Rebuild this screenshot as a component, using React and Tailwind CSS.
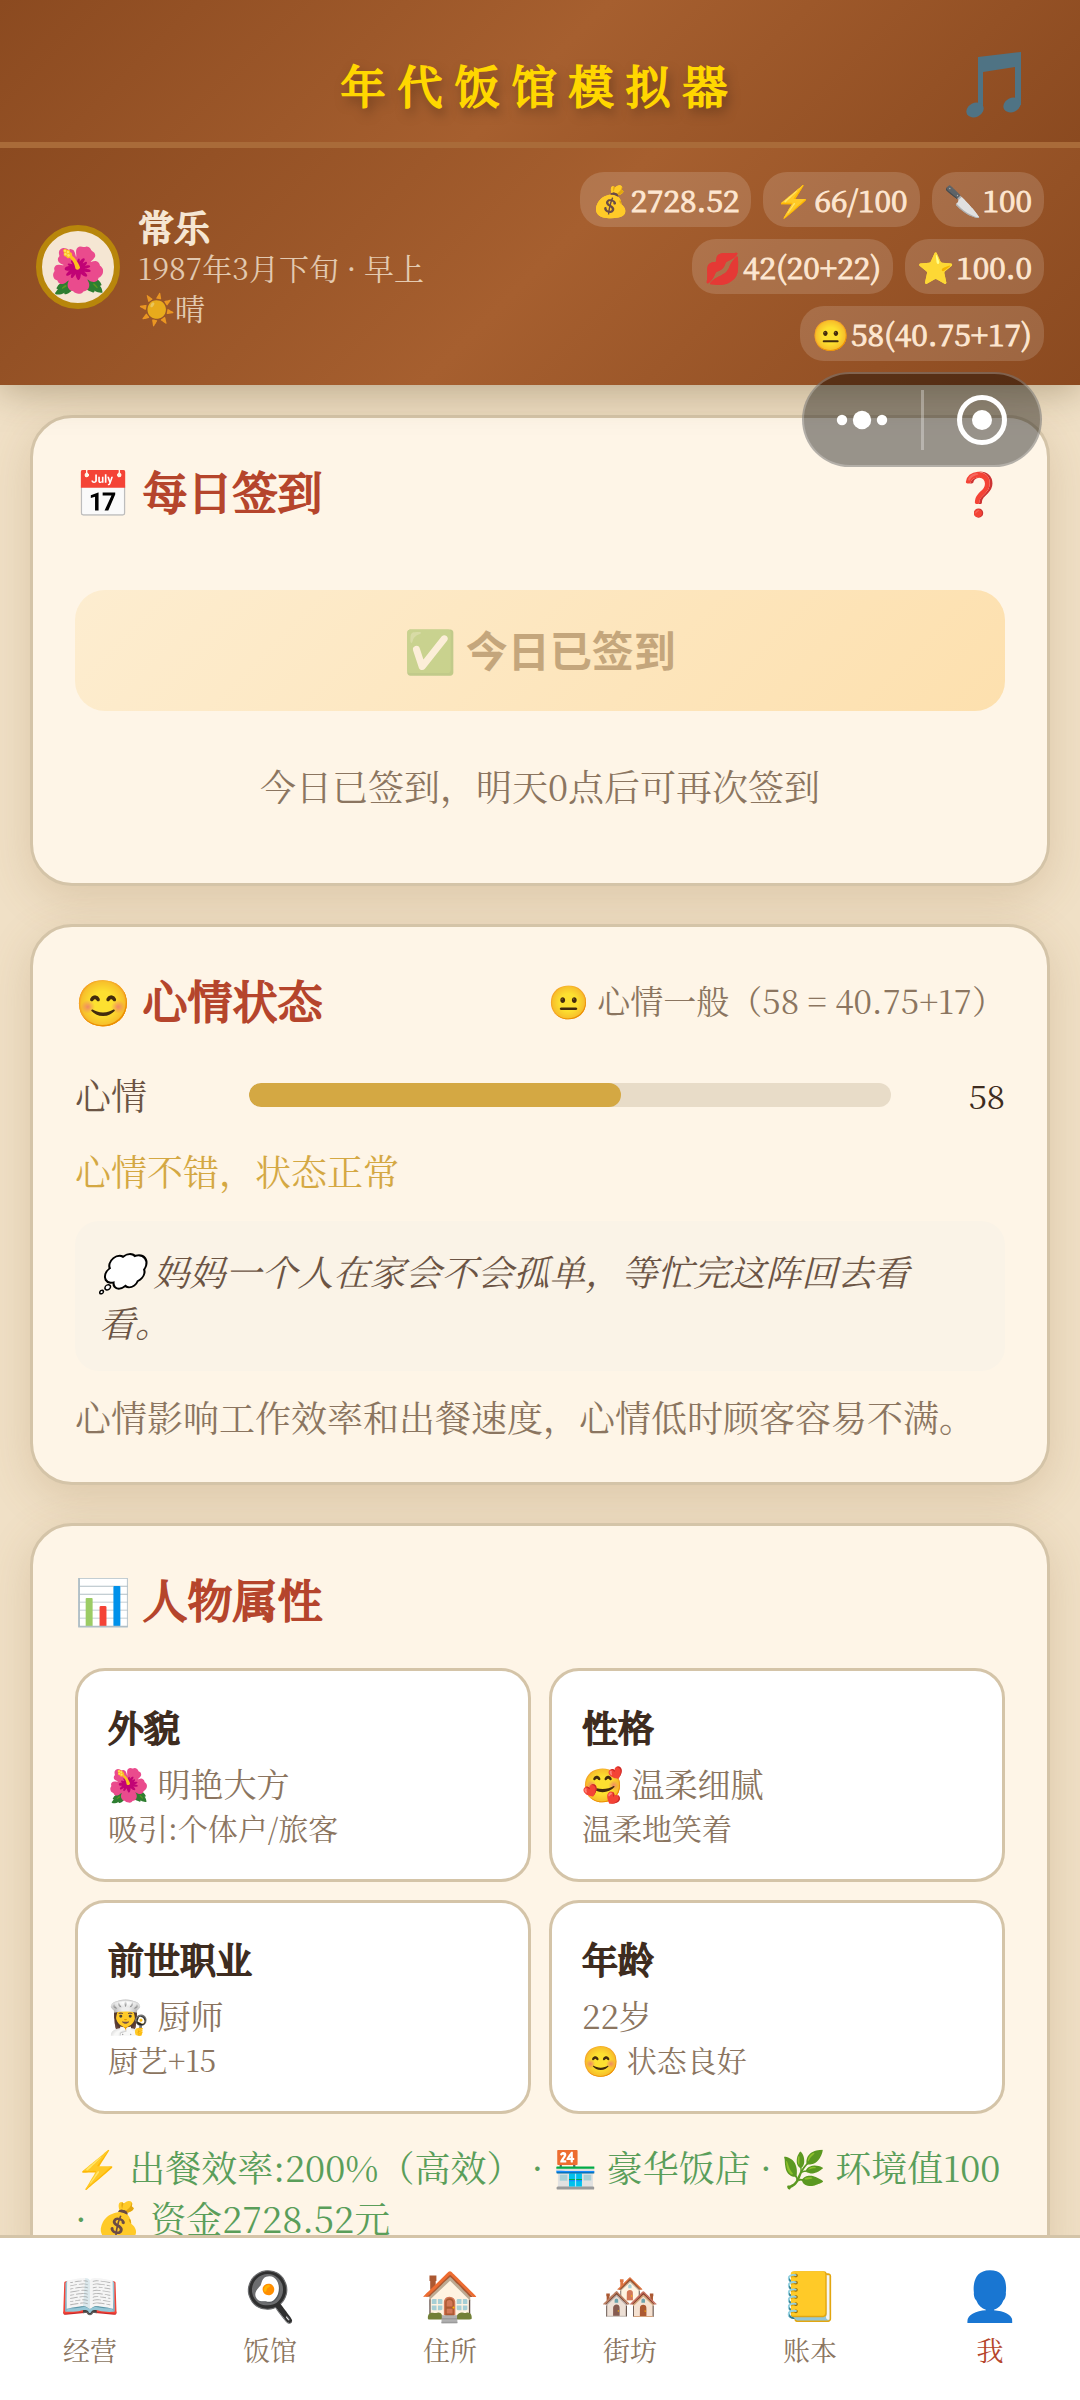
import { useState } from "react";

const STATS = [
    { icon: "💰", label: "资金", value: "2728.52" },
    { icon: "⚡", label: "体力", value: "66/100" },
    { icon: "🔪", label: "厨艺", value: "100" },
    { icon: "💋", label: "魅力", value: "42(20+22)" },
    { icon: "⭐", label: "口碑", value: "100.0" },
    { icon: "😐", label: "心情", value: "58(40.75+17)" },
];

const ATTRIBUTES = [
    { title: "外貌", main: "🌺 明艳大方", sub: "吸引:个体户/旅客" },
    { title: "性格", main: "🥰 温柔细腻", sub: "温柔地笑着" },
    { title: "前世职业", main: "👩‍🍳 厨师", sub: "厨艺+15" },
    { title: "年龄", main: "22岁", sub: "😊 状态良好" },
];

const TABS = [
    { id: "business", icon: "📖", label: "经营" },
    { id: "restaurant", icon: "🍳", label: "饭馆" },
    { id: "home", icon: "🏠", label: "住所" },
    { id: "street", icon: "🏘️", label: "街坊" },
    { id: "ledger", icon: "📒", label: "账本" },
    { id: "me", icon: "👤", label: "我" },
];

function Card({ icon, title, extra, children }) {
    return (
        <section className="rounded-[42px] border-3 border-[#d4c4a8] bg-[#fef5e7] px-[42px] pt-[37px] pb-[39px] shadow-[0_12px_45px_rgba(139,100,50,0.2)]">
            <div className="flex items-center justify-between">
                <h2 className="text-[45px] leading-[72px] text-[#b5452c] [-webkit-text-stroke:2px]">
                    {icon} {title}
                </h2>
                {extra}
            </div>
            {children}
        </section>
    );
}

function MusicNote() {
    return (
        <svg width="56" height="66" viewBox="0 0 56 66" fill="#4f7384">
            <path d="M12 5 L55 0 V53 H49 V15 L17 20 V57 H12 Z" />
            <ellipse cx="9" cy="58" rx="9" ry="7" transform="rotate(-28 9 58)" />
            <ellipse cx="46" cy="53" rx="9" ry="7" transform="rotate(-28 46 53)" />
        </svg>
    );
}

// Floating mini program capsule
function Capsule() {
    return (
        <div className="fixed top-[372px] right-[38px] z-20 flex h-[95px] w-[240px] items-center rounded-full border-2 border-white/25 bg-black/40">
            <button type="button" aria-label="更多" className="flex h-full flex-1 items-center justify-center">
                <svg width="52" height="20" viewBox="0 0 52 20" fill="#fff">
                    <circle cx="6" cy="10" r="5.2" />
                    <circle cx="26" cy="10" r="9.2" />
                    <circle cx="46" cy="10" r="5.2" />
                </svg>
            </button>
            <span className="h-[60px] w-[3px] bg-white/30"></span>
            <button type="button" aria-label="关闭" className="flex h-full flex-1 items-center justify-center">
                <svg width="52" height="52" viewBox="0 0 52 52">
                    <circle cx="26" cy="26" r="22.5" fill="none" stroke="#fff" strokeWidth="5" />
                    <circle cx="26" cy="26" r="10" fill="#fff" />
                </svg>
            </button>
        </div>
    );
}

export default function App() {
    const [tab, setTab] = useState("me");
    const mood = 58;

    return (
        <div className="min-h-screen bg-[#f0e0c6] font-['Noto_Serif_CJK_SC','Noto_Serif_SC','Liberation_Serif','Noto_Sans_CJK_SC',serif] text-[#3e2c20]">
            <div className="relative z-10 shadow-[0_6px_36px_rgba(80,60,20,0.35)]">
                <header className="relative flex h-[148px] items-center justify-center border-b-6 border-[#a96b39] bg-[linear-gradient(135deg,#8b4a20_0%,#a65f2f_50%,#8b4a20_100%)] pt-7">
                    <h1 className="text-[45px] leading-[60px] tracking-[12px] text-[#ffd700] [-webkit-text-stroke:2px] [text-shadow:3px_6px_12px_rgba(0,0,0,0.5)]">
                        年代饭馆模拟器
                    </h1>
                    <button type="button" aria-label="音乐" className="absolute right-[58px]">
                        <MusicNote />
                    </button>
                </header>

                <div className="flex items-center justify-between bg-[linear-gradient(135deg,#8b4a20_0%,#a65f2f_50%,#8b4a20_100%)] px-9 py-6">
                    <div className="flex items-center gap-[18px] text-[#f5e6d3]">
                        <div className="flex size-[84px] shrink-0 items-center justify-center rounded-full border-6 border-[#b8860b] bg-[#f5e6d3] text-[45px] leading-none">
                            🌺
                        </div>
                        <div>
                            <p className="text-[36px] leading-[40px] [-webkit-text-stroke:2px]">常乐</p>
                            <p className="text-[30px] leading-[40px] opacity-80">
                                1987年3月下旬 · 早上
                                <br />
                                ☀️晴
                            </p>
                        </div>
                    </div>
                    <ul className="flex w-[500px] flex-wrap justify-end gap-3">
                        {STATS.map((s) => (
                            <li
                                key={s.label}
                                title={s.label}
                                className="flex h-[55px] items-center gap-0.5 rounded-3xl bg-white/15 px-3 text-[30px] text-[#fde6d0] [-webkit-text-stroke:1px]"
                            >
                                <span>{s.icon}</span>
                                <span>{s.value}</span>
                            </li>
                        ))}
                    </ul>
                </div>
            </div>

            <Capsule />

            <main className="flex flex-col gap-[38px] px-[30px] pt-[30px]">
                <Card
                    icon="📅"
                    title="每日签到"
                    extra={
                        <button type="button" aria-label="签到说明" className="text-[42px] leading-[72px]">
                            ❓
                        </button>
                    }
                >
                    <button
                        type="button"
                        disabled
                        className="mt-[63px] h-[121px] w-full rounded-[30px] bg-[linear-gradient(135deg,#fdedd0,#fde0ae)] pb-1 font-['Noto_Sans_CJK_SC',sans-serif] text-[42px] font-bold text-[#c4a67c]"
                    >
                        <span className="opacity-40">✅</span> 今日已签到
                    </button>
                    <p className="mt-[47px] mb-[30px] text-center text-[36px] leading-[56px] text-[#8b7560]">
                        今日已签到，明天0点后可再次签到
                    </p>
                </Card>

                <Card
                    icon="😊"
                    title="心情状态"
                    extra={<span className="text-[33px] text-[#8b7560]">😐 心情一般（58 = 40.75+17）</span>}
                >
                    <div className="mt-[33px] flex items-center text-[36px] leading-[52px]">
                        <span id="mood-label" className="w-[174px] text-[#6b5444]">
                            心情
                        </span>
                        <div
                            role="progressbar"
                            aria-labelledby="mood-label"
                            aria-valuenow={mood}
                            className="h-6 flex-1 overflow-hidden rounded-full bg-[#e8dcc8]"
                        >
                            <div className="h-full rounded-full bg-[#d4a843]" style={{ width: `${mood}%` }}></div>
                        </div>
                        <span className="w-[114px] text-right text-[33px]">{mood}</span>
                    </div>
                    <p className="mt-6 text-[36px] leading-[52px] text-[#d4a843]">心情不错，状态正常</p>
                    <blockquote className="mt-6 rounded-3xl bg-[#faf3e7] p-6 text-[36px] leading-[51px] text-[#6b5444] italic">
                        💭 妈妈一个人在家会不会孤单，等忙完这阵回去看看。
                    </blockquote>
                    <p className="mt-5 text-[36px] leading-[52px] text-[#8b7560]">
                        心情影响工作效率和出餐速度，心情低时顾客容易不满。
                    </p>
                </Card>

                <Card icon="📊" title="人物属性">
                    <div className="mt-[33px] grid grid-cols-2 gap-[18px]">
                        {ATTRIBUTES.map((a) => (
                            <div
                                key={a.title}
                                className="rounded-[30px] border-3 border-[#d4c4a8] bg-white px-[30px] pt-7 pb-8 text-[#8b7560]"
                            >
                                <h3 className="text-[36px] leading-[56px] text-[#3e2c20] [-webkit-text-stroke:2px]">{a.title}</h3>
                                <p className="mt-1 text-[33px] leading-[48px]">{a.main}</p>
                                <p className="text-[30px] leading-[40px]">{a.sub}</p>
                            </div>
                        ))}
                    </div>
                    <p className="mt-[27px] text-[36px] leading-[51px] text-[#5a9e5a]">
                        ⚡ 出餐效率:200%（高效） · 🏪 豪华饭店 · 🌿 环境值100 · 💰 资金2728.52元
                    </p>
                </Card>
            </main>

            <nav className="fixed inset-x-0 bottom-0 z-30 grid h-[165px] grid-cols-6 border-t-3 border-[#d4c4a8] bg-white">
                {TABS.map((t) => (
                    <button
                        key={t.id}
                        type="button"
                        onClick={() => setTab(t.id)}
                        className={`flex flex-col items-center pt-6 text-[27px] ${tab === t.id ? "text-[#b5452c]" : "text-[#8b7560]"}`}
                    >
                        <span className="text-[48px] leading-[62px]">{t.icon}</span>
                        <span className="leading-[52px]">{t.label}</span>
                    </button>
                ))}
            </nav>
        </div>
    );
}
